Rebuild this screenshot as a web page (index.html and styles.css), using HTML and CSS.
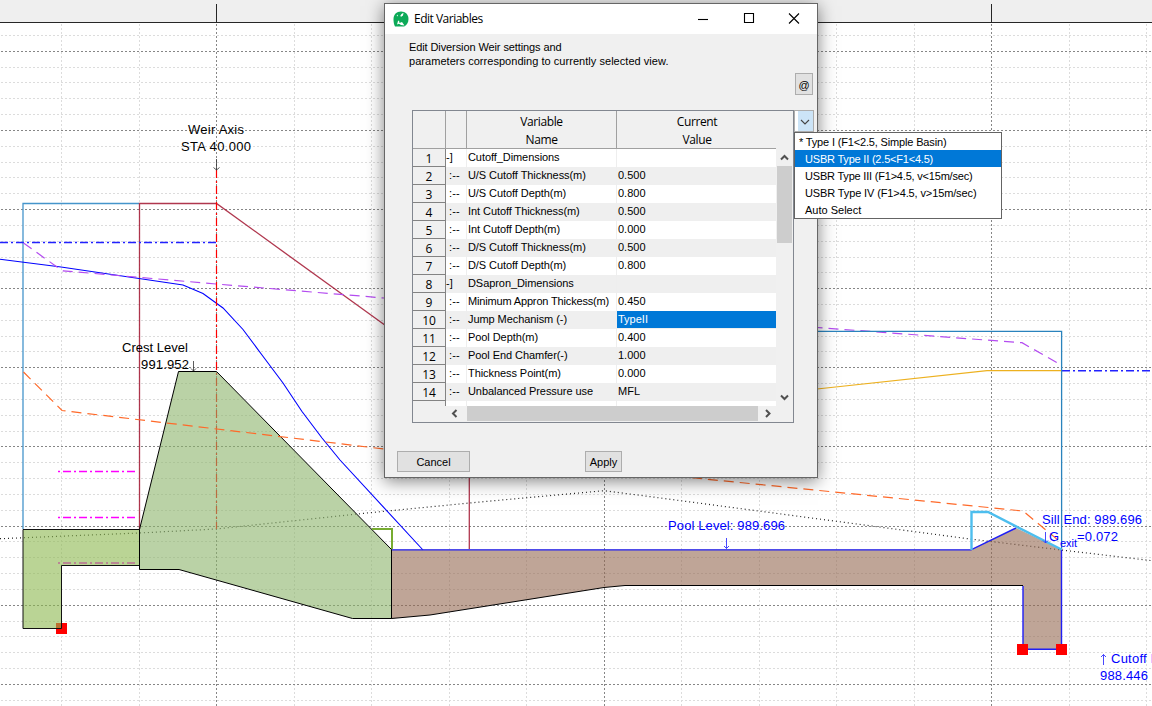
FILE: index.html
```
<!DOCTYPE html>
<html lang="en">
<head>
<meta charset="utf-8">
<title>Edit Variables</title>
<link rel="stylesheet" href="styles.css">
</head>
<body>
<main class="workspace">
<svg class="plot" width="1152" height="706" viewBox="0 0 1152 706">
  <rect class="band" width="1152" height="22"/>
  <path class="grid-minor" d="M1 35.5H1152M1 67.5H1152M1 82.5H1152M1 98.5H1152M1 114.5H1152M1 146.5H1152M1 162.5H1152M1 177.5H1152M1 193.5H1152M1 225.5H1152M1 241.5H1152M1 257.5H1152M1 272.5H1152M1 304.5H1152M1 320.5H1152M1 336.5H1152M1 351.5H1152M1 383.5H1152M1 399.5H1152M1 415.5H1152M1 431.5H1152M1 462.5H1152M1 478.5H1152M1 494.5H1152M1 510.5H1152M1 541.5H1152M1 557.5H1152M1 573.5H1152M1 589.5H1152M1 621.5H1152M1 636.5H1152M1 652.5H1152M1 668.5H1152M1 700.5H1152"/>
  <path class="grid-minor" d="M61.5 24V706M139.5 24V706M294.5 24V706M371.5 24V706M449.5 24V706M526.5 24V706M681.5 24V706M759.5 24V706M836.5 24V706M914.5 24V706M1069.5 24V706M1146.5 24V706"/>
  <path class="grid-major" d="M1 51.5H1152M1 130.5H1152M1 209.5H1152M1 288.5H1152M1 367.5H1152M1 446.5H1152M1 526.5H1152M1 605.5H1152M1 684.5H1152M216.5 24V706M604.5 24V706M991.5 24V706"/>
  <path class="axis" d="M0 22.5H1152M216.5 4V22M991.5 4V22"/>

  <path class="ground" d="M0 538.7L139 533L216 529L367 513L480 502L604 490.7L640 495.3L970 539L1061.5 550L1152 560.7"/>
  <path class="wall-left" d="M23 529V203.5H139"/>
  <path class="weir-wall" d="M139.5 529V203.5H216.500L469.300 386V549"/>
  <path class="water" d="M0 259.2L61 267L139 278.5L183 285L203 293.5L223 308L243 329.5L262 355L283 383L302 411.5L322 438L340 460L423 550"/>
  <path class="level" d="M0 242.5H216"/>
  <path class="level" d="M1062 370.700H1152"/>
  <path class="energy" d="M23.5 243L57 267L63 270.8L216 284L384 298L600 312L817 327.5L1022 342.7L1061 365"/>
  <path class="wall-right" d="M817 331.300H1061.600V549"/>
  <path class="tail" d="M817 389L987 370.7H1061"/>
  <path class="station" d="M216.5 170V529"/>
  <path class="mag" d="M58 471.5H136M58 517.5H136M58 563H136"/>
  <rect class="marker" x="56" y="623" width="11" height="11"/>

  <path class="concrete-left" d="M23 529.5H139.5V565.5H61.5V628.5H23Z"/>
  <path class="concrete-weir" d="M178.5 371.5H216.5L391.5 549.5V618.5H352.5L179 569.5H139.5V529.5Z"/>
  <path class="apron" d="M391.5 549.5H971L1016 528L1061.5 549.5V649.5H1023V585.5H625L604 587.5L430 615L391.5 618.5Z"/>
  <path class="apron-base" d="M391.5 549.5V618.5L430 615L604 587.5L625 585.5H1023"/>
  <path class="apron-top" d="M392 549.900H971L1016 528M1023 586V649.200H1061.500V549.500"/>
  <path class="ledge" d="M372 529H392V549"/>
  <path class="pressure" d="M23.5 372L62 410.5L384 449L695 478L1023 511L1058 540"/>
  <path class="sill" d="M971.5 550V512H988L1061.5 549.5"/>
  <rect class="marker" x="1017" y="644" width="11" height="11"/>
  <rect class="marker" x="1056" y="644" width="11" height="11"/>

  <g class="note">
    <text x="188" y="134" textLength="56">Weir Axis</text>
    <text x="181" y="151" textLength="70">STA 40.000</text>
    <text x="122" y="352" textLength="66">Crest Level</text>
    <text x="141" y="369" textLength="48">991.952</text>
    <path d="M216.5 159V170M213.5 167.5L216.5 170L219.5 167.5M193.5 361V371M191 368.5L193.5 371L196 368.5"/>
  </g>
  <g class="note note-blue">
    <text x="668" y="530" textLength="117">Pool Level: 989.696</text>
    <text x="1042" y="524" textLength="100">Sill End: 989.696</text>
    <text x="1049" y="541">G</text>
    <text class="sub" x="1060" y="547" textLength="17">exit</text>
    <text x="1077" y="541" textLength="41">=0.072</text>
    <text x="1111" y="663" textLength="47">Cutoff L</text>
    <text x="1100" y="680" textLength="48">988.446</text>
    <path d="M726.5 538V548.5M724 546L726.5 548.5L729 546M1045.5 532V543M1043 540.5L1045.5 543L1048 540.5M1103.5 665V654.5M1101 657L1103.5 654.5L1106 657"/>
  </g>
</svg>

<section class="dialog">
  <header class="titlebar">
    <svg class="logo" width="16" height="16" viewBox="0 0 16 16"><path fill="#0caa58" d="M8 .5C12.500.5 15.500 3.500 15.500 8C15.500 11.500 13.800 14.200 11.200 15.400L2 15.400C.8 13.500.5 11 .5 8C.5 3.500 3.500.5 8 .5Z"/><path fill="#fff" d="M8.500 3L10.500 1.800L10 4.500L8.200 5.800L7.200 5ZM4 13.500L5 10L6 9.500L6.500 12L9 11L11.500 14.500L8 14L6 12.800ZM3.500 5L5 3.500L4.800 5.200Z"/></svg>
    <h1 class="title">Edit Variables</h1>
    <div class="controls">
      <svg width="12" height="12" viewBox="0 0 12 12"><path d="M1 6.500H11"/></svg>
      <svg width="12" height="12" viewBox="0 0 12 12"><path d="M1.500.5H10.500V9.500H1.500Z"/></svg>
      <svg width="12" height="12" viewBox="0 0 12 12"><path d="M1 .5L11 10.500M11 .5L1 10.500"/></svg>
    </div>
  </header>
  <div class="content">
    <p class="intro"><span class="intro-a">Edit Diversion Weir settings and</span><br>parameters corresponding to currently selected view.</p>
    <div class="tools"><button class="btn at">@</button></div>
    <div class="table-line">
      <div class="table">
        <div class="thead"><span></span><span></span><span>Variable<br>Name</span><span>Current<br>Value</span></div>
        <div class="tbody">
          <div class="rows">
            <div class="row"><b>1</b><i class="root">-]</i><span>Cutoff_Dimensions</span><span></span></div>
            <div class="row"><b>2</b><i>:--</i><span>U/S Cutoff Thickness(m)</span><span>0.500</span></div>
            <div class="row"><b>3</b><i>:--</i><span>U/S Cutoff Depth(m)</span><span>0.800</span></div>
            <div class="row"><b>4</b><i>:--</i><span>Int Cutoff Thickness(m)</span><span>0.500</span></div>
            <div class="row"><b>5</b><i>:--</i><span>Int Cutoff Depth(m)</span><span>0.000</span></div>
            <div class="row"><b>6</b><i>:--</i><span>D/S Cutoff Thickness(m)</span><span>0.500</span></div>
            <div class="row"><b>7</b><i>:--</i><span>D/S Cutoff Depth(m)</span><span>0.800</span></div>
            <div class="row"><b>8</b><i class="root">-]</i><span>DSapron_Dimensions</span><span></span></div>
            <div class="row"><b>9</b><i>:--</i><span class="tight">Minimum Appron Thickess(m)</span><span>0.450</span></div>
            <div class="row"><b>10</b><i>:--</i><span>Jump Mechanism (-)</span><span class="selected">TypeII</span></div>
            <div class="row"><b>11</b><i>:--</i><span>Pool Depth(m)</span><span>0.400</span></div>
            <div class="row"><b>12</b><i>:--</i><span>Pool End Chamfer(-)</span><span>1.000</span></div>
            <div class="row"><b>13</b><i>:--</i><span>Thickness Point(m)</span><span>0.000</span></div>
            <div class="row"><b>14</b><i>:--</i><span>Unbalanced Pressure use</span><span>MFL</span></div>
            <div class="row"><b></b><i></i><span></span><span></span></div>
          </div>
          <div class="vscroll">
            <svg width="15" height="17" viewBox="0 0 15 17"><path d="M4 10.500L7.500 7L11 10.500"/></svg>
            <div class="vthumb"></div>
            <svg class="down" width="15" height="16" viewBox="0 0 15 16"><path d="M4 5.500L7.500 9L11 5.500"/></svg>
          </div>
        </div>
        <div class="hscroll">
          <svg width="21" height="15" viewBox="0 0 21 15"><path d="M10.500 4L7 7.500L10.500 11"/></svg>
          <div class="hthumb"></div>
          <svg width="18" height="15" viewBox="0 0 18 15"><path d="M8 4L11.500 7.500L8 11"/></svg>
        </div>
      </div>
      <div class="combo"><svg width="15" height="20" viewBox="0 0 15 20"><path d="M3 9L7 13L11 9"/></svg></div>
    </div>
    <footer class="actions"><button class="btn cancel">Cancel</button><button class="btn apply">Apply</button></footer>
  </div>
</section>

<ul class="menu">
  <li class="current">* Type I (F1&lt;2.5, Simple Basin)</li>
  <li class="active">USBR Type II (2.5&lt;F1&lt;4.5)</li>
  <li>USBR Type III (F1&gt;4.5, v&lt;15m/sec)</li>
  <li class="wide">USBR Type IV (F1&gt;4.5, v&gt;15m/sec)</li>
  <li class="auto">Auto Select</li>
</ul>
</main>
</body>
</html>
```
FILE: styles.css
```
* { box-sizing: border-box; }
body { margin: 0; font-family: "Liberation Sans", Arial, sans-serif; font-size: 11px; color: #000; }
.workspace { position: relative; width: 1152px; height: 706px; overflow: hidden; background: #fff; }

/* Section plot */
.plot { display: block; }
.plot path { fill: none; stroke-width: 1; }
.plot .band { fill: #efefef; }
.plot .grid-minor { stroke: #dcdcdc; stroke-dasharray: 2 2; }
.plot .grid-major { stroke: #868686; stroke-dasharray: 2 2; }
.plot .axis { stroke: #262626; }
.plot .ground { stroke: #222; stroke-dasharray: 1 3; stroke-width: 1.2; }
.plot .wall-left { stroke: #4595cb; stroke-width: 1.3; }
.plot .wall-right { stroke: #2a83bd; stroke-width: 1.3; }
.plot .weir-wall { stroke: #a2142f; stroke-width: 1.3; opacity: .85; }
.plot .water { stroke: #0000ff; stroke-width: 1.1; }
.plot .level { stroke: #2222ff; stroke-dasharray: 8 3 2 3; stroke-width: 1.4; }
.plot .energy { stroke: #b44cf0; stroke-dasharray: 10 6; stroke-width: 1.2; }
.plot .pressure { stroke: #ff6929; stroke-dasharray: 10 6; stroke-width: 1.2; }
.plot .tail { stroke: #edb120; stroke-width: 1.2; }
.plot .station { stroke: #ff0000; stroke-dasharray: 8 3 2 3; stroke-width: 1.2; }
.plot .mag { stroke: #ff00ff; stroke-dasharray: 2 3 8 3; stroke-width: 1.3; }
.plot .marker { fill: #ff0000; }
.plot .concrete-left { fill: rgba(140, 183, 78, .6); stroke: #111; }
.plot .concrete-weir { fill: rgba(140, 180, 107, .6); stroke: #000; }
.plot .apron { fill: rgba(148, 105, 82, .6); }
.plot .apron-base { stroke: #000; }
.plot .apron-top { stroke: #1f1ff5; stroke-width: 1.4; }
.plot .ledge { stroke: #77ac30; stroke-width: 2; }
.plot .sill { stroke: #4dbeee; stroke-width: 2.4; }
.note text { font-size: 13px; }
.plot .note path { stroke: #333; stroke-width: .8; }
.note-blue text { fill: #0000ff; }
.plot .note-blue path { stroke: #3333ff; stroke-width: .9; }
.note .sub { font-size: 11px; }

/* Dialog window */
.dialog { position: absolute; left: 384px; top: 3px; width: 434px; height: 475px; background: #f0f0f0; border: 1px solid #666; box-shadow: 0 3px 16px rgba(0, 0, 0, .5); }
.titlebar { display: flex; align-items: center; height: 30px; padding: 0 17px 0 8px; background: #fff; }
.title { margin: 0 auto 0 5px; font: 12px/16px "Open Sans", "Noto Sans", sans-serif; letter-spacing: -.5px; }
.controls { display: flex; gap: 33.5px; }
.controls path { fill: none; stroke: #000; stroke-width: 1.1; }
.content { padding: 6px 3px 0 12px; }
.intro { margin: 0 0 0 12px; height: 33px; line-height: 14px; letter-spacing: .04px; }
.intro-a { letter-spacing: -.1px; }
.tools { display: flex; justify-content: flex-end; height: 37px; padding-right: 1px; }
.btn { padding: 0; border: 1px solid #adadad; background: #e1e1e1; font: 11px/19px "Liberation Sans", Arial, sans-serif; color: #000; }
.at { width: 18px; height: 22px; padding-top: 2px; }
.table-line { display: flex; margin-left: 15px; }
.table { width: 382px; height: 313px; border: 1px solid #828790; background: #f0f0f0; }
.thead { display: grid; grid-template-columns: 33px 21px 150px 159px; height: 38px; width: 363px; border-bottom: 1px solid #a0a0a0; font: 12px/18px "Open Sans", "Noto Sans", sans-serif; letter-spacing: -.4px; text-align: center; }
.thead span { padding-top: 2px; border-right: 1px solid #a0a0a0; }
.thead span:last-child { padding-left: 1px; border-right: 0; }
.tbody { display: flex; height: 257px; }
.rows { width: 363px; height: 257px; overflow: hidden; }
.row { display: grid; grid-template-columns: 33px 21px 150px 159px; grid-template-rows: 18px; height: 18px; line-height: 17px; background: #fff; letter-spacing: -.07px; }
.row:nth-child(even) { background: #efefef; }
.row b { height: 18px; border-right: 1px solid #838383; border-bottom: 1px solid #838383; background: #f0f0f0; font: 12px/19px "Open Sans", "Noto Sans", sans-serif; text-align: center; letter-spacing: 0; }
.row i { padding-left: 3px; font-style: normal; letter-spacing: .1px; border-right: 1px solid #eee; }
.row .root { padding-left: 0; }
.row span { padding-left: 1px; border-right: 1px solid #eee; white-space: nowrap; }
.row span:last-child { border-right: 0; letter-spacing: 0; }
.row .tight { letter-spacing: -.16px; }
.row .selected { height: 17px; background: #0078d7; color: #fff; }
.vscroll { display: flex; flex-direction: column; width: 15px; margin-left: 1px; }
.vthumb { height: 77px; background: #cdcdcd; }
.down { margin-top: auto; }
.vscroll path, .hscroll path { fill: none; stroke: #505050; stroke-width: 2; }
.hscroll { display: flex; padding-left: 33px; height: 15px; }
.hthumb { width: 291px; background: #cdcdcd; }
.combo { width: 20px; height: 22px; padding-left: 3px; border: 1px solid #adadad; background: #fff; }
.combo svg { display: block; background: #cce4f7; }
.combo path { fill: none; stroke: #444; stroke-width: 1.1; }
.actions { display: flex; gap: 115px; margin-top: 28px; }
.btn.cancel { width: 73px; height: 21px; padding-top: 1px; }
.btn.apply { width: 37px; height: 21px; padding-top: 1px; }

/* Drop-down list */
.menu { position: absolute; left: 794px; top: 132px; width: 208px; height: 87px; margin: 0; padding: 0; border: 1px solid #646464; background: #fff; list-style: none; letter-spacing: -.2px; }
.menu li { height: 17px; padding-left: 10px; line-height: 18px; white-space: nowrap; }
.menu .current { padding-left: 4px; letter-spacing: -.16px; }
.menu .active { background: #0078d7; color: #fff; }
.menu .wide { letter-spacing: -.12px; }
.menu .auto { letter-spacing: 0; }
```
